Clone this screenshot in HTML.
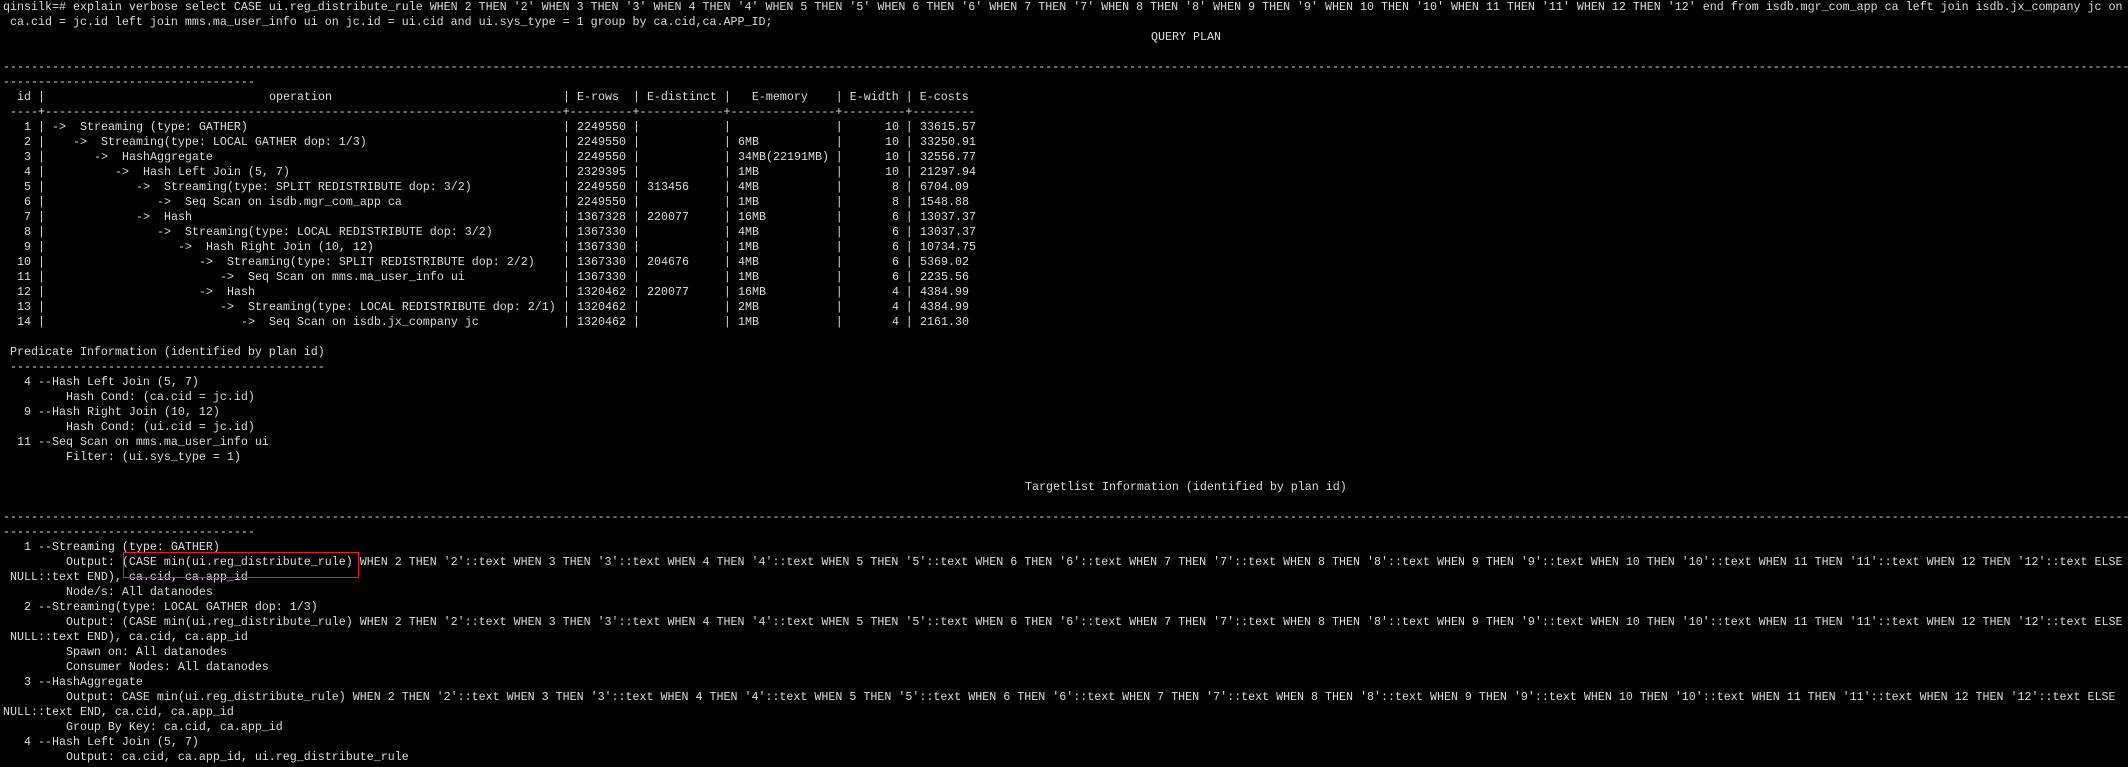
<!DOCTYPE html>
<html><head><meta charset="utf-8">
<style>
html,body{margin:0;padding:0;background:#000;}
body{width:2128px;height:767px;overflow:hidden;position:relative;}
#t{position:absolute;left:3px;top:0;width:2125px;font-family:"Liberation Mono",monospace;font-size:11.667px;line-height:15px;color:#dcdcdc;}
.l{height:15px;white-space:pre;overflow:hidden;position:relative;}
.l span{position:absolute;top:0;}
#box{position:absolute;left:123px;top:552px;width:234px;height:24px;border:1px solid #e0201c;}
</style></head><body>
<div id="t">
<div class="l">qinsilk=# explain verbose select CASE ui.reg_distribute_rule WHEN 2 THEN '2' WHEN 3 THEN '3' WHEN 4 THEN '4' WHEN 5 THEN '5' WHEN 6 THEN '6' WHEN 7 THEN '7' WHEN 8 THEN '8' WHEN 9 THEN '9' WHEN 10 THEN '10' WHEN 11 THEN '11' WHEN 12 THEN '12' end from isdb.mgr_com_app ca left join isdb.jx_company jc on</div>
<div class="l"> ca.cid = jc.id left join mms.ma_user_info ui on jc.id = ui.cid and ui.sys_type = 1 group by ca.cid,ca.APP_ID;</div>
<div class="l"><span style="left:1148px">QUERY PLAN</span></div>
<div class="l"></div>
<div class="l">------------------------------------------------------------------------------------------------------------------------------------------------------------------------------------------------------------------------------------------------------------------------------------------------------------------------------------------</div>
<div class="l">------------------------------------</div>
<div class="l"><span style="left:14px">id</span><span style="left:35px">|</span><span style="left:266px">operation</span><span style="left:560px">| E-rows  | E-distinct |   E-memory    | E-width | E-costs</span></div>
<div class="l"> ----+--------------------------------------------------------------------------+---------+------------+---------------+---------+---------</div>

<div class="l"><span style="left:21px">1</span><span style="left:35px">|</span><span style="left:49px">-&gt;  Streaming (type: GATHER)</span><span style="left:560px">|         |            |               |         |</span><span style="left:574px">2249550</span><span style="left:882px">10</span><span style="left:917px">33615.57</span></div>
<div class="l"><span style="left:21px">2</span><span style="left:35px">|</span><span style="left:70px">-&gt;  Streaming(type: LOCAL GATHER dop: 1/3)</span><span style="left:560px">|         |            |               |         |</span><span style="left:574px">2249550</span><span style="left:735px">6MB</span><span style="left:882px">10</span><span style="left:917px">33250.91</span></div>
<div class="l"><span style="left:21px">3</span><span style="left:35px">|</span><span style="left:91px">-&gt;  HashAggregate</span><span style="left:560px">|         |            |               |         |</span><span style="left:574px">2249550</span><span style="left:735px">34MB(22191MB)</span><span style="left:882px">10</span><span style="left:917px">32556.77</span></div>
<div class="l"><span style="left:21px">4</span><span style="left:35px">|</span><span style="left:112px">-&gt;  Hash Left Join (5, 7)</span><span style="left:560px">|         |            |               |         |</span><span style="left:574px">2329395</span><span style="left:735px">1MB</span><span style="left:882px">10</span><span style="left:917px">21297.94</span></div>
<div class="l"><span style="left:21px">5</span><span style="left:35px">|</span><span style="left:133px">-&gt;  Streaming(type: SPLIT REDISTRIBUTE dop: 3/2)</span><span style="left:560px">|         |            |               |         |</span><span style="left:574px">2249550</span><span style="left:644px">313456</span><span style="left:735px">4MB</span><span style="left:889px">8</span><span style="left:917px">6704.09</span></div>
<div class="l"><span style="left:21px">6</span><span style="left:35px">|</span><span style="left:154px">-&gt;  Seq Scan on isdb.mgr_com_app ca</span><span style="left:560px">|         |            |               |         |</span><span style="left:574px">2249550</span><span style="left:735px">1MB</span><span style="left:889px">8</span><span style="left:917px">1548.88</span></div>
<div class="l"><span style="left:21px">7</span><span style="left:35px">|</span><span style="left:133px">-&gt;  Hash</span><span style="left:560px">|         |            |               |         |</span><span style="left:574px">1367328</span><span style="left:644px">220077</span><span style="left:735px">16MB</span><span style="left:889px">6</span><span style="left:917px">13037.37</span></div>
<div class="l"><span style="left:21px">8</span><span style="left:35px">|</span><span style="left:154px">-&gt;  Streaming(type: LOCAL REDISTRIBUTE dop: 3/2)</span><span style="left:560px">|         |            |               |         |</span><span style="left:574px">1367330</span><span style="left:735px">4MB</span><span style="left:889px">6</span><span style="left:917px">13037.37</span></div>
<div class="l"><span style="left:21px">9</span><span style="left:35px">|</span><span style="left:175px">-&gt;  Hash Right Join (10, 12)</span><span style="left:560px">|         |            |               |         |</span><span style="left:574px">1367330</span><span style="left:735px">1MB</span><span style="left:889px">6</span><span style="left:917px">10734.75</span></div>
<div class="l"><span style="left:14px">10</span><span style="left:35px">|</span><span style="left:196px">-&gt;  Streaming(type: SPLIT REDISTRIBUTE dop: 2/2)</span><span style="left:560px">|         |            |               |         |</span><span style="left:574px">1367330</span><span style="left:644px">204676</span><span style="left:735px">4MB</span><span style="left:889px">6</span><span style="left:917px">5369.02</span></div>
<div class="l"><span style="left:14px">11</span><span style="left:35px">|</span><span style="left:217px">-&gt;  Seq Scan on mms.ma_user_info ui</span><span style="left:560px">|         |            |               |         |</span><span style="left:574px">1367330</span><span style="left:735px">1MB</span><span style="left:889px">6</span><span style="left:917px">2235.56</span></div>
<div class="l"><span style="left:14px">12</span><span style="left:35px">|</span><span style="left:196px">-&gt;  Hash</span><span style="left:560px">|         |            |               |         |</span><span style="left:574px">1320462</span><span style="left:644px">220077</span><span style="left:735px">16MB</span><span style="left:889px">4</span><span style="left:917px">4384.99</span></div>
<div class="l"><span style="left:14px">13</span><span style="left:35px">|</span><span style="left:217px">-&gt;  Streaming(type: LOCAL REDISTRIBUTE dop: 2/1)</span><span style="left:560px">|         |            |               |         |</span><span style="left:574px">1320462</span><span style="left:735px">2MB</span><span style="left:889px">4</span><span style="left:917px">4384.99</span></div>
<div class="l"><span style="left:14px">14</span><span style="left:35px">|</span><span style="left:238px">-&gt;  Seq Scan on isdb.jx_company jc</span><span style="left:560px">|         |            |               |         |</span><span style="left:574px">1320462</span><span style="left:735px">1MB</span><span style="left:889px">4</span><span style="left:917px">2161.30</span></div>
<div class="l"></div>
<div class="l"> Predicate Information (identified by plan id)</div>
<div class="l"> ---------------------------------------------</div>
<div class="l">   4 --Hash Left Join (5, 7)</div>
<div class="l">         Hash Cond: (ca.cid = jc.id)</div>
<div class="l">   9 --Hash Right Join (10, 12)</div>
<div class="l">         Hash Cond: (ui.cid = jc.id)</div>
<div class="l">  11 --Seq Scan on mms.ma_user_info ui</div>
<div class="l">         Filter: (ui.sys_type = 1)</div>
<div class="l"></div>
<div class="l"><span style="left:1022px">Targetlist Information (identified by plan id)</span></div>
<div class="l"></div>
<div class="l">------------------------------------------------------------------------------------------------------------------------------------------------------------------------------------------------------------------------------------------------------------------------------------------------------------------------------------------</div>
<div class="l">------------------------------------</div>
<div class="l">   1 --Streaming (type: GATHER)</div>
<div class="l">         Output: (CASE min(ui.reg_distribute_rule) WHEN 2 THEN '2'::text WHEN 3 THEN '3'::text WHEN 4 THEN '4'::text WHEN 5 THEN '5'::text WHEN 6 THEN '6'::text WHEN 7 THEN '7'::text WHEN 8 THEN '8'::text WHEN 9 THEN '9'::text WHEN 10 THEN '10'::text WHEN 11 THEN '11'::text WHEN 12 THEN '12'::text ELSE</div>
<div class="l"> NULL::text END), ca.cid, ca.app_id</div>
<div class="l">         Node/s: All datanodes</div>
<div class="l">   2 --Streaming(type: LOCAL GATHER dop: 1/3)</div>
<div class="l">         Output: (CASE min(ui.reg_distribute_rule) WHEN 2 THEN '2'::text WHEN 3 THEN '3'::text WHEN 4 THEN '4'::text WHEN 5 THEN '5'::text WHEN 6 THEN '6'::text WHEN 7 THEN '7'::text WHEN 8 THEN '8'::text WHEN 9 THEN '9'::text WHEN 10 THEN '10'::text WHEN 11 THEN '11'::text WHEN 12 THEN '12'::text ELSE</div>
<div class="l"> NULL::text END), ca.cid, ca.app_id</div>
<div class="l">         Spawn on: All datanodes</div>
<div class="l">         Consumer Nodes: All datanodes</div>
<div class="l">   3 --HashAggregate</div>
<div class="l">         Output: CASE min(ui.reg_distribute_rule) WHEN 2 THEN '2'::text WHEN 3 THEN '3'::text WHEN 4 THEN '4'::text WHEN 5 THEN '5'::text WHEN 6 THEN '6'::text WHEN 7 THEN '7'::text WHEN 8 THEN '8'::text WHEN 9 THEN '9'::text WHEN 10 THEN '10'::text WHEN 11 THEN '11'::text WHEN 12 THEN '12'::text ELSE</div>
<div class="l">NULL::text END, ca.cid, ca.app_id</div>
<div class="l">         Group By Key: ca.cid, ca.app_id</div>
<div class="l">   4 --Hash Left Join (5, 7)</div>
<div class="l">         Output: ca.cid, ca.app_id, ui.reg_distribute_rule</div>
</div>
<div id="box"></div>
</body></html>
